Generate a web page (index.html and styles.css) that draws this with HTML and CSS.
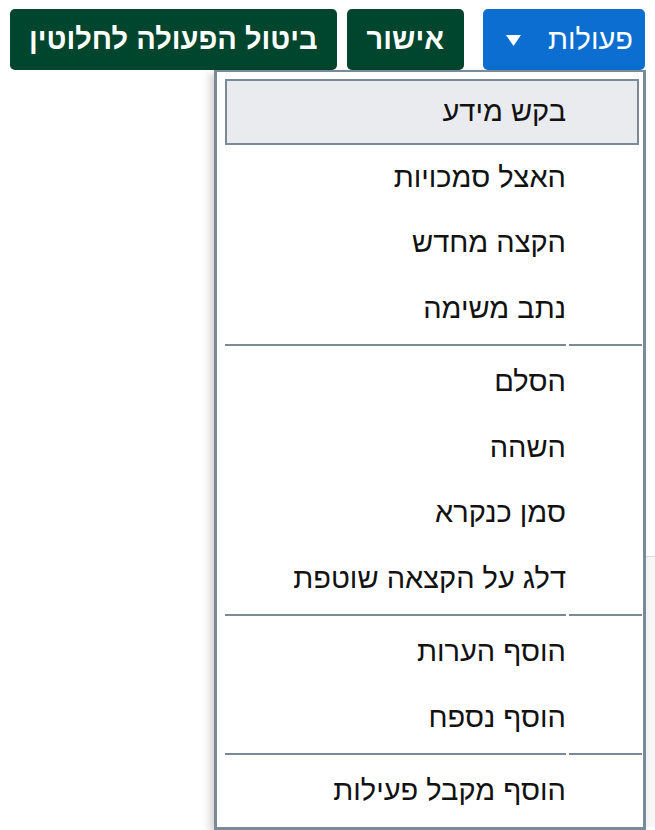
FILE: index.html
```html
<!DOCTYPE html>
<html lang="he" dir="rtl">
<head>
    <meta charset="UTF-8">
    <title>פעולות</title>
    <link rel="stylesheet" href="styles.css">
</head>
<body>
    <div class="toolbar">
        <div class="actions">
            <button class="button button-primary">
                <span>פעולות</span>
                <svg class="caret" width="15" height="11" viewBox="0 0 15 11"><path d="M0 0 L15 0 L7.5 11 Z" fill="#fff"/></svg>
            </button>

            <div class="menu">
                <div class="menu-item active">בקש מידע</div>
                <div class="menu-item">האצל סמכויות</div>
                <div class="menu-item">הקצה מחדש</div>
                <div class="menu-item">נתב משימה</div>
                <div class="menu-separator"><span></span><span></span></div>
                <div class="menu-item">הסלם</div>
                <div class="menu-item">השהה</div>
                <div class="menu-item">סמן כנקרא</div>
                <div class="menu-item">דלג על הקצאה שוטפת</div>
                <div class="menu-separator"><span></span><span></span></div>
                <div class="menu-item">הוסף הערות</div>
                <div class="menu-item">הוסף נספח</div>
                <div class="menu-separator"><span></span><span></span></div>
                <div class="menu-item">הוסף מקבל פעילות</div>
            </div>
        </div>
        <button class="button button-dark button-ok">אישור</button>
        <button class="button button-dark button-cancel">ביטול הפעולה לחלוטין</button>
    </div>

    <div class="content">
        <div class="panel"></div>
    </div>
</body>
</html>
```

FILE: styles.css
```css
:root {
    --blue: #0b6ed0;
    --dark-green: #00452d;
    --menu-border: #7b8a98;
    --hover-bg: #e9ebee;
    --text-color: #121212;
}

body {
    margin: 0;
    padding: 0;
    font-family: "Liberation Sans", Arial, "DejaVu Sans", sans-serif;
    color: var(--text-color);
    background-color: white;
    width: 655px;
    height: 830px;
    overflow: hidden;
}

.toolbar {
    display: flex;
    align-items: flex-start;
    gap: 10px;
    padding: 9px 10px 0 10px;
}

.actions {
    position: relative;
    margin-left: 9px;
}

.button {
    height: 61px;
    border: none;
    border-radius: 5px;
    font-family: inherit;
    font-size: 29px;
    color: white;
    cursor: pointer;
    display: flex;
    align-items: center;
}

.button-primary {
    background-color: var(--blue);
    padding: 0 12px 0 23px;
    gap: 27px;
}

.button-dark {
    background-color: var(--dark-green);
    font-weight: bold;
    padding: 0 20px;
}

.button-cancel {
    padding: 0 19px;
}

.caret {
    display: block;
    margin-top: 2px;
}

.menu {
    position: absolute;
    top: 100%;
    right: -1px;
    width: 432px;
    background-color: white;
    border: 3px solid var(--menu-border);
    border-top-width: 2px;
    padding: 7px 4px 3px 8px;
    box-shadow: -4px 3px 8px rgba(0, 0, 0, 0.18);
    box-sizing: border-box;
}

.menu-item {
    height: 65.5px;
    box-sizing: border-box;
    border: 2px solid transparent;
    display: flex;
    align-items: center;
    padding-right: 71px;
    font-size: 29px;
    white-space: nowrap;
}

.menu-item.active {
    background-color: var(--hover-bg);
    border-color: var(--menu-border);
}

.menu-separator {
    display: flex;
    gap: 3px;
    padding: 3px 0;
    margin-right: -3px;
}

.menu-separator span {
    height: 2px;
    background-color: var(--menu-border);
}

.menu-separator span:first-child {
    width: 73px;
}

.menu-separator span:last-child {
    flex: 1;
}

.content {
    padding-top: 486px;
    padding-left: 313px;
}

.panel {
    height: 270px;
    border-top: 1px solid #dcdcdc;
    border-left: 1px solid #dcdcdc;
    background-color: #f7f7f7;
}
```
